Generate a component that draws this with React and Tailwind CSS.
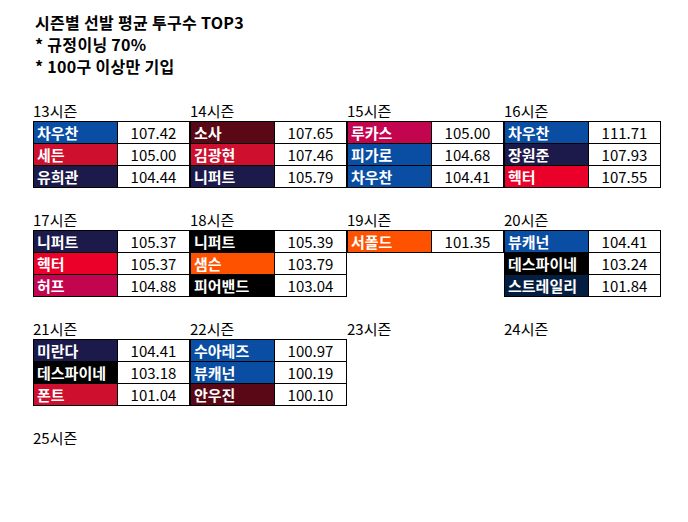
const SEASONS = [
  { label: "13시즌", rows: [["차우찬", "107.42", "bg-[#0a4ea3]"], ["세든", "105.00", "bg-[#ce0f2e]"], ["유희관", "104.44", "bg-[#1c1a4b]"]] },
  { label: "14시즌", rows: [["소사", "107.65", "bg-[#5a0816]"], ["김광현", "107.46", "bg-[#ce0f2e]"], ["니퍼트", "105.79", "bg-[#1c1a4b]"]] },
  { label: "15시즌", rows: [["루카스", "105.00", "bg-[#c3054f]"], ["피가로", "104.68", "bg-[#0a4ea3]"], ["차우찬", "104.41", "bg-[#0a4ea3]"]] },
  { label: "16시즌", rows: [["차우찬", "111.71", "bg-[#0a4ea3]"], ["장원준", "107.93", "bg-[#1c1a4b]"], ["헥터", "107.55", "bg-[#ea0029]"]] },
  { label: "17시즌", rows: [["니퍼트", "105.37", "bg-[#1c1a4b]"], ["헥터", "105.37", "bg-[#ea0029]"], ["허프", "104.88", "bg-[#c3054f]"]] },
  { label: "18시즌", rows: [["니퍼트", "105.39", "bg-black"], ["샘슨", "103.79", "bg-[#ff5200]"], ["피어밴드", "103.04", "bg-black"]] },
  { label: "19시즌", rows: [["서폴드", "101.35", "bg-[#ff5200]"]] },
  { label: "20시즌", rows: [["뷰캐넌", "104.41", "bg-[#0a4ea3]"], ["데스파이네", "103.24", "bg-black"], ["스트레일리", "101.84", "bg-[#041e42]"]] },
  { label: "21시즌", rows: [["미란다", "104.41", "bg-[#1c1a4b]"], ["데스파이네", "103.18", "bg-black"], ["폰트", "101.04", "bg-[#ce0f2e]"]] },
  { label: "22시즌", rows: [["수아레즈", "100.97", "bg-[#0a4ea3]"], ["뷰캐넌", "100.19", "bg-[#0a4ea3]"], ["안우진", "100.10", "bg-[#5a0816]"]] },
  { label: "23시즌", rows: [] },
  { label: "24시즌", rows: [] },
  { label: "25시즌", rows: [] },
];

function Season({ label, rows }) {
  return (
    <div className="w-[157px] h-[87px]">
      <div className="h-[20px] leading-[20px]">{label}</div>
      {rows.length > 0 && (
        <div className="border-l border-t border-black">
          {rows.map(([name, val, bg]) => (
            <div key={name + val} className="flex h-[22px]">
              <div className={`w-[84px] border-r border-b border-black pl-[3px] text-white font-bold leading-[21px] ${bg}`}>
                {name}
              </div>
              <div className="w-[72px] border-r border-b border-black text-center leading-[21px]">{val}</div>
            </div>
          ))}
        </div>
      )}
    </div>
  );
}

export default function App() {
  return (
    <div className="w-[688px] h-[522px] bg-white text-black pl-[33px] pt-[11px] text-[15px]"
      style={{ fontFamily: '"Noto Sans CJK KR", "Noto Sans", sans-serif' }}>
      {/* Title */}
      <div className="font-bold text-[16px] leading-[22px] ml-[2px] tracking-[0.3px]">
        <p>시즌별 선발 평균 투구수 TOP3</p>
        <p>* 규정이닝 70%</p>
        <p>* 100구 이상만 기입</p>
      </div>

      {/* Seasons grid */}
      <div className="grid grid-cols-[repeat(4,157px)] gap-y-[22px] mt-[24px]">
        {SEASONS.map((s) => (
          <Season key={s.label} {...s} />
        ))}
      </div>
    </div>
  );
}
